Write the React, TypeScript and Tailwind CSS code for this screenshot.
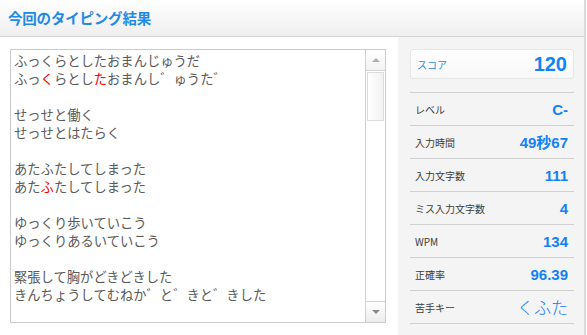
import React from 'react'

type Seg = { t: string; miss?: boolean }

// typed sentence pairs: original text / typed reading (miss chars in red)
const pairs: { src: string; typed: Seg[] }[] = [
  {
    src: 'ふっくらとしたおまんじゅうだ',
    typed: [{ t: 'ふっ' }, { t: 'く', miss: true }, { t: 'らとし' }, { t: 'た', miss: true }, { t: 'おまんし゛ゅうた゛' }],
  },
  { src: 'せっせと働く', typed: [{ t: 'せっせとはたらく' }] },
  {
    src: 'あたふたしてしまった',
    typed: [{ t: 'あた' }, { t: 'ふ', miss: true }, { t: 'たしてしまった' }],
  },
  { src: 'ゆっくり歩いていこう', typed: [{ t: 'ゆっくりあるいていこう' }] },
  { src: '緊張して胸がどきどきした', typed: [{ t: 'きんちょうしてむねか゛と゛きと゛きした' }] },
]

const rows: { label: string; value: string; kana?: boolean }[] = [
  { label: 'レベル', value: 'C-' },
  { label: '入力時間', value: '49秒67' },
  { label: '入力文字数', value: '111' },
  { label: 'ミス入力文字数', value: '4' },
  { label: 'WPM', value: '134' },
  { label: '正確率', value: '96.39' },
  { label: '苦手キー', value: 'くふた', kana: true },
]

const jp = "font-['Noto_Sans_CJK_JP',sans-serif]"
const num = "font-['Liberation_Sans','Noto_Sans_CJK_JP',sans-serif]"

export default function App() {
  return (
    <div className={`w-[587px] h-[335px] bg-white overflow-hidden ${jp}`}>
      <div className="w-[586px] h-full border-r-2 border-[#dadada] flex flex-col">
        {/* Header */}
        <div className="h-[37px] shrink-0 border-b border-[#d4d4d4] bg-gradient-to-b from-white to-[#efefef] flex items-center pl-2">
          <h1 className="text-[14.5px] font-bold text-[#1f8ae6] tracking-[-0.2px]">今回のタイピング結果</h1>
        </div>

        <div className="flex flex-1 min-h-0">
          {/* Left: typed text box */}
          <div className="w-[398px] shrink-0 pl-[10px] pr-[12px] pt-[12px]">
            <div className="h-[274px] border border-[#cccccc] flex">
              <div className="flex-1 overflow-hidden pl-[3px] pt-[2px] text-[13.3px] leading-[18px] text-[#5a5a5a] whitespace-nowrap">
                {pairs.map((p, i) => (
                  <div key={i} className={i > 0 ? 'mt-[18px]' : ''}>
                    <div>{p.src}</div>
                    <div>
                      {p.typed.map((s, j) => (
                        <span key={j} className={s.miss ? 'text-[#ff0000]' : ''}>
                          {s.t}
                        </span>
                      ))}
                    </div>
                  </div>
                ))}
              </div>
              {/* fake scrollbar */}
              <div className="w-[20px] shrink-0 border-l border-[#cfcfcf] flex flex-col">
                <div className="h-[21px] border-b border-[#d4d4d4] bg-gradient-to-b from-white to-[#f3f3f3] flex items-center justify-center">
                  <div className="w-0 h-0 border-l-[4px] border-r-[4px] border-b-[4px] border-l-transparent border-r-transparent border-b-[#b0b0b0]" />
                </div>
                <div className="flex-1 px-[1px] pt-[1px]">
                  <div className="h-[49px] border border-[#dcdcdc] bg-gradient-to-r from-white to-[#f1f1f1]" />
                </div>
                <div className="h-[21px] border-t border-[#d4d4d4] bg-gradient-to-b from-white to-[#ededed] flex items-center justify-center">
                  <div className="w-0 h-0 border-l-[4px] border-r-[4px] border-t-[4px] border-l-transparent border-r-transparent border-t-[#888]" />
                </div>
              </div>
            </div>
          </div>

          {/* Right: stats */}
          <div className="flex-1 bg-[#f4f4f4] pl-[12px] pr-[10px] pt-[12px]">
            <div className="h-[30px] rounded-[3px] border border-[#e6e6e6] bg-gradient-to-b from-white to-[#f8f8f8] flex items-center justify-between pl-[6px] pr-[6px]">
              <span className="text-[10px] text-[#1f8ae6]">スコア</span>
              <span className={`${num} text-[20px] font-bold text-[#1282f4] leading-none`}>120</span>
            </div>
            <div className="mt-[13px] border-b border-[#d0d0d0]">
              {rows.map((r) => (
                <div
                  key={r.label}
                  className="h-[33px] border-t border-[#d0d0d0] flex items-center justify-between pl-[5px] pr-[6px]"
                >
                  <span className="text-[10px] text-[#3c3c3c]">{r.label}</span>
                  {r.kana ? (
                    <span className="text-[17px] font-light text-[#1282f4]">{r.value}</span>
                  ) : (
                    <span className={`${num} text-[15px] font-bold text-[#1282f4] leading-none`}>{r.value}</span>
                  )}
                </div>
              ))}
            </div>
          </div>
        </div>
      </div>
    </div>
  )
}
